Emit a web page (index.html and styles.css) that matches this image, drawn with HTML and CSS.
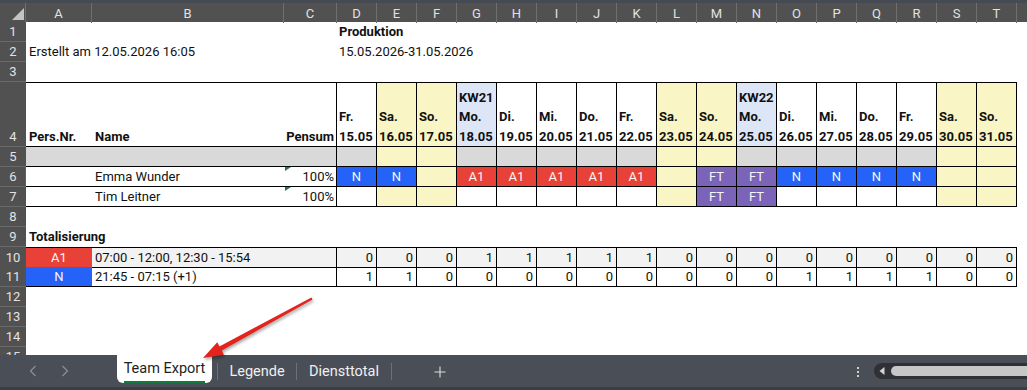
FILE: index.html
```html
<!DOCTYPE html>
<html lang="de">
<head>
<meta charset="utf-8">
<title>Team Export</title>
<link rel="stylesheet" href="styles.css">
</head>
<body>
<div class="app">
  <div class="topstrip"></div>
  <div class="sheet">
    <div class="row colhdr">
      <div class="corner"><svg width="26" height="19" viewBox="0 0 26 19"><polygon points="24,5 24,17 12,17" fill="#c4c4c4"/></svg></div>
      <div>A</div><div>B</div><div>C</div><div>D</div><div>E</div><div>F</div><div>G</div><div>H</div><div>I</div><div>J</div><div>K</div><div>L</div><div>M</div><div>N</div><div>O</div><div>P</div><div>Q</div><div>R</div><div>S</div><div>T</div><div class="last"></div>
    </div>

    <div class="row">
      <div class="rh">1</div>
      <div class="c span3"></div>
      <div class="c d-text bold spanrest">Produktion</div>
    </div>
    <div class="row">
      <div class="rh">2</div>
      <div class="c span3">Erstellt am 12.05.2026 16:05</div>
      <div class="c d-text spanrest">15.05.2026-31.05.2026</div>
    </div>
    <div class="row">
      <div class="rh">3</div>
    </div>

    <div class="row tall">
      <div class="rh">4</div>
      <div class="c hd bt bb">Pers.Nr.</div>
      <div class="c hd bt bb">Name</div>
      <div class="c hd bt bb br right">Pensum</div>
      <div class="c day bt bb br"><span>Fr.</span><span>15.05</span></div>
      <div class="c day bt bb br we"><span>Sa.</span><span>16.05</span></div>
      <div class="c day bt bb br we"><span>So.</span><span>17.05</span></div>
      <div class="c day bt bb br kw"><span>KW21</span><span>Mo.</span><span>18.05</span></div>
      <div class="c day bt bb br"><span>Di.</span><span>19.05</span></div>
      <div class="c day bt bb br"><span>Mi.</span><span>20.05</span></div>
      <div class="c day bt bb br"><span>Do.</span><span>21.05</span></div>
      <div class="c day bt bb br"><span>Fr.</span><span>22.05</span></div>
      <div class="c day bt bb br we"><span>Sa.</span><span>23.05</span></div>
      <div class="c day bt bb br we"><span>So.</span><span>24.05</span></div>
      <div class="c day bt bb br kw"><span>KW22</span><span>Mo.</span><span>25.05</span></div>
      <div class="c day bt bb br"><span>Di.</span><span>26.05</span></div>
      <div class="c day bt bb br"><span>Mi.</span><span>27.05</span></div>
      <div class="c day bt bb br"><span>Do.</span><span>28.05</span></div>
      <div class="c day bt bb br"><span>Fr.</span><span>29.05</span></div>
      <div class="c day bt bb br we"><span>Sa.</span><span>30.05</span></div>
      <div class="c day bt bb br we"><span>So.</span><span>31.05</span></div>
    </div>

    <div class="row">
      <div class="rh">5</div>
      <div class="c g bb"></div>
      <div class="c g bb"></div>
      <div class="c g bb br"></div>
      <div class="c g bb br"></div>
      <div class="c we bb br"></div>
      <div class="c we bb br"></div>
      <div class="c g bb br"></div>
      <div class="c g bb br"></div>
      <div class="c g bb br"></div>
      <div class="c g bb br"></div>
      <div class="c g bb br"></div>
      <div class="c we bb br"></div>
      <div class="c we bb br"></div>
      <div class="c g bb br"></div>
      <div class="c g bb br"></div>
      <div class="c g bb br"></div>
      <div class="c g bb br"></div>
      <div class="c g bb br"></div>
      <div class="c we bb br"></div>
      <div class="c we bb br"></div>
    </div>

    <div class="row">
      <div class="rh active">6</div>
      <div class="c bb"></div>
      <div class="c bb">Emma Wunder</div>
      <div class="c bb br right flag">100%</div>
      <div class="c sh n bb br">N</div>
      <div class="c sh n bb br">N</div>
      <div class="c we bb br"></div>
      <div class="c sh a1 bb br">A1</div>
      <div class="c sh a1 bb br">A1</div>
      <div class="c sh a1 bb br">A1</div>
      <div class="c sh a1 bb br">A1</div>
      <div class="c sh a1 bb br">A1</div>
      <div class="c we bb br"></div>
      <div class="c sh ft bb br">FT</div>
      <div class="c sh ft bb br">FT</div>
      <div class="c sh n bb br">N</div>
      <div class="c sh n bb br">N</div>
      <div class="c sh n bb br">N</div>
      <div class="c sh n bb br">N</div>
      <div class="c we bb br"></div>
      <div class="c we bb br"></div>
    </div>

    <div class="row">
      <div class="rh">7</div>
      <div class="c bb"></div>
      <div class="c bb">Tim Leitner</div>
      <div class="c bb br right flag">100%</div>
      <div class="c bb br"></div>
      <div class="c we bb br"></div>
      <div class="c we bb br"></div>
      <div class="c bb br"></div>
      <div class="c bb br"></div>
      <div class="c bb br"></div>
      <div class="c bb br"></div>
      <div class="c bb br"></div>
      <div class="c we bb br"></div>
      <div class="c sh ft bb br">FT</div>
      <div class="c sh ft bb br">FT</div>
      <div class="c bb br"></div>
      <div class="c bb br"></div>
      <div class="c bb br"></div>
      <div class="c bb br"></div>
      <div class="c we bb br"></div>
      <div class="c we bb br"></div>
    </div>

    <div class="row">
      <div class="rh">8</div>
    </div>
    <div class="row">
      <div class="rh">9</div>
      <div class="c span3 bold">Totalisierung</div>
    </div>

    <div class="row">
      <div class="rh">10</div>
      <div class="c sh a1 bt bb">A1</div>
      <div class="c tot bt bb br span2">07:00 - 12:00, 12:30 - 15:54</div>
      <div class="c tot bt bb br num">0</div>
      <div class="c tot bt bb br num">0</div>
      <div class="c tot bt bb br num">0</div>
      <div class="c tot bt bb br num">1</div>
      <div class="c tot bt bb br num">1</div>
      <div class="c tot bt bb br num">1</div>
      <div class="c tot bt bb br num">1</div>
      <div class="c tot bt bb br num">1</div>
      <div class="c tot bt bb br num">0</div>
      <div class="c tot bt bb br num">0</div>
      <div class="c tot bt bb br num">0</div>
      <div class="c tot bt bb br num">0</div>
      <div class="c tot bt bb br num">0</div>
      <div class="c tot bt bb br num">0</div>
      <div class="c tot bt bb br num">0</div>
      <div class="c tot bt bb br num">0</div>
      <div class="c tot bt bb br num">0</div>
    </div>
    <div class="row">
      <div class="rh">11</div>
      <div class="c sh n bb">N</div>
      <div class="c bb br span2">21:45 - 07:15 (+1)</div>
      <div class="c bb br num">1</div>
      <div class="c bb br num">1</div>
      <div class="c bb br num">0</div>
      <div class="c bb br num">0</div>
      <div class="c bb br num">0</div>
      <div class="c bb br num">0</div>
      <div class="c bb br num">0</div>
      <div class="c bb br num">0</div>
      <div class="c bb br num">0</div>
      <div class="c bb br num">0</div>
      <div class="c bb br num">0</div>
      <div class="c bb br num">1</div>
      <div class="c bb br num">1</div>
      <div class="c bb br num">1</div>
      <div class="c bb br num">1</div>
      <div class="c bb br num">0</div>
      <div class="c bb br num">0</div>
    </div>

    <div class="row"><div class="rh">12</div></div>
    <div class="row"><div class="rh">13</div></div>
    <div class="row"><div class="rh">14</div></div>
    <div class="row"><div class="rh">15</div></div>
  </div>

  <div class="tabbar">
    <div class="nav">
      <svg width="12" height="12" viewBox="0 0 12 12"><polyline points="8.5,1 3.5,6 8.5,11" fill="none" stroke="#8c9098" stroke-width="1.2"/></svg>
      <svg width="12" height="12" viewBox="0 0 12 12"><polyline points="3.5,1 8.5,6 3.5,11" fill="none" stroke="#8c9098" stroke-width="1.2"/></svg>
    </div>
    <div class="tab-active"><span>Team Export</span></div>
    <div class="sep first"></div>
    <div class="tab w78">Legende</div>
    <div class="sep"></div>
    <div class="tab w94">Diensttotal</div>
    <div class="sep"></div>
    <div class="add"><svg width="12" height="12" viewBox="0 0 12 12"><path d="M6 0.5V11.5M0.5 6H11.5" stroke="#dcdcdc" stroke-width="1.1" fill="none"/></svg></div>
    <div class="spacer"></div>
    <div class="more"><i></i><i></i><i></i></div>
    <div class="hscroll">
      <svg class="larrow" width="6" height="8" viewBox="0 0 6 8"><polygon points="5.5,0 5.5,8 0.5,4" fill="#d4d4d4"/></svg>
      <div class="thumb"></div>
    </div>
  </div>
  <div class="bottomstrip"></div>
</div>

<svg class="arrow" width="1027" height="390" viewBox="0 0 1027 390">
  <polygon points="312.6,299.4 311.4,297.4 219.4,346.6 217.3,342.3 203,358 223.9,354.7 221.8,350.4" fill="#e3231c"/>
</svg>
</body>
</html>
```

FILE: styles.css
```css
* {
  box-sizing: border-box;
  margin: 0;
  padding: 0;
}

html, body {
  width: 1027px;
  height: 390px;
  overflow: hidden;
}

body {
  font-family: Roboto, "Liberation Sans", sans-serif;
  font-size: 13px;
  color: #111;
  background: #fff;
  position: relative;
}

.app {
  width: 1027px;
  height: 390px;
  display: flex;
  flex-direction: column;
}

.topstrip {
  height: 3px;
  background: #464a52;
  flex: none;
}

.sheet {
  height: 352px;
  overflow: hidden;
  flex: none;
  display: flex;
  flex-direction: column;
}

.row {
  display: grid;
  grid-template-columns: 26px 66px 192px 53px repeat(17, 40px) 1fr;
  height: 20px;
  flex: none;
}

.row.tall {
  height: 65px;
}

/* column letters */
.colhdr {
  height: 19px;
  background: #515151;
  color: #e2e2e2;
}

.colhdr > div {
  border-right: 1px solid #6f6f6f;
  text-align: center;
  line-height: 19px;
  padding-top: 1px;
}

.colhdr > div.last {
  border-right: none;
}

.corner {
  padding-top: 0 !important;
}

.corner svg {
  display: block;
}

/* row numbers */
.rh {
  background: #515151;
  color: #e2e2e2;
  border-bottom: 1px solid #6a6a6a;
  display: flex;
  align-items: flex-end;
  justify-content: center;
  line-height: 19px;
}

.rh.active {
  box-shadow: inset -1px 0 0 #22864a;
}

/* cells */
.c {
  line-height: 19px;
  padding: 0 3px;
  white-space: nowrap;
  position: relative;
}

.span2 { grid-column: span 2; }
.span3 { grid-column: span 3; }
.spanrest { grid-column: 5 / span 17; }

.d-text { padding-left: 2px; }

.bold { font-weight: 700; }
.right { text-align: right; padding-right: 2px; }

.bt { border-top: 1px solid #000; }
.bb { border-bottom: 1px solid #000; }
.br { border-right: 1px solid #000; }

.hd {
  font-weight: 700;
  display: flex;
  align-items: flex-end;
  line-height: 19.5px;
}

.hd.right {
  justify-content: flex-end;
}

.day {
  display: flex;
  flex-direction: column;
  justify-content: flex-end;
  font-weight: 700;
  line-height: 19.5px;
  padding: 0 2px;
}

.we { background: #faf5c4; }
.kw { background: #dce6f7; }
.g { background: #d9d9d9; }
.tot { background: #f2f2f2; }

.sh {
  text-align: center;
  color: #f6f6f6;
}

.n { background: #2563f8; }
.a1 { background: #e84238; }
.ft { background: #7a63b9; }

.num {
  text-align: right;
  padding-right: 3px;
}

.flag::before {
  content: "";
  position: absolute;
  top: 0;
  left: 1px;
  width: 0;
  height: 0;
  border-top: 4px solid #1f7d3b;
  border-right: 6px solid transparent;
}

/* sheet tabs */
.tabbar {
  height: 32px;
  flex: none;
  background: #4a4e57;
  display: flex;
  align-items: center;
  color: #f0f0f0;
  font-size: 14.5px;
  overflow: hidden;
}

.nav {
  width: 117px;
  flex: none;
  display: flex;
  align-items: center;
  gap: 20px;
  padding-left: 27px;
  height: 100%;
}

.nav svg {
  display: block;
}

.tab-active {
  align-self: flex-start;
  flex: none;
  width: 95px;
  height: 28px;
  background: #fff;
  border-radius: 0 0 6px 6px;
  color: #1e1e1e;
  display: flex;
  justify-content: center;
}

.tab-active span {
  display: block;
  margin-top: 5px;
  line-height: 18px;
  border-bottom: 2px solid #137a3e;
}

.sep {
  width: 1px;
  height: 17px;
  background: #6d717a;
  flex: none;
}

.sep.first {
  margin-left: 5px;
}

.tab {
  flex: none;
  text-align: center;
  line-height: 18px;
  padding-top: 2px;
}

.w78 { width: 78px; }
.w94 { width: 94px; }

.add {
  width: 95px;
  flex: none;
  display: flex;
  justify-content: center;
  padding-top: 1px;
}

.add svg {
  display: block;
}

.spacer {
  flex: 1;
}

.more {
  width: 16px;
  flex: none;
  display: flex;
  flex-direction: column;
  align-items: center;
  gap: 2px;
  padding-top: 1px;
}

.more i {
  display: block;
  width: 2px;
  height: 2px;
  background: #cfcfcf;
}

.hscroll {
  flex: none;
  width: 153px;
  margin-left: 8px;
  height: 16px;
  margin-top: 0;
  background: #2f3136;
  border-radius: 8px 0 0 8px;
  display: flex;
  align-items: center;
  padding-left: 5px;
}

.larrow {
  display: block;
  flex: none;
}

.thumb {
  flex: 1;
  height: 10px;
  margin-left: 6px;
  background: #c7c7c7;
  border-radius: 5px 0 0 5px;
}

.bottomstrip {
  height: 3px;
  flex: none;
  background: #3b3e45;
}

/* annotation arrow */
.arrow {
  position: absolute;
  top: 0;
  left: 0;
  pointer-events: none;
  filter: drop-shadow(1px 2px 1.5px rgba(0, 0, 0, 0.35));
}
```
